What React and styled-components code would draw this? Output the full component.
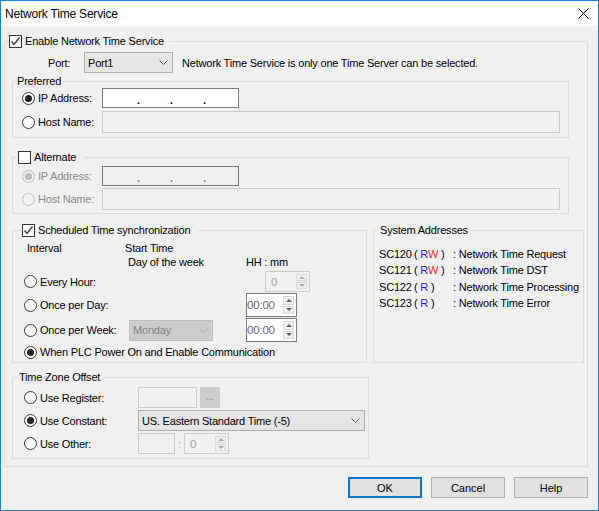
import React from "react";
import styled, { createGlobalStyle } from "styled-components";

const GlobalStyle = createGlobalStyle`
  html, body {
    margin: 0;
    padding: 0;
    background: #fff;
  }
  body {
    font-family: "Liberation Sans", Arial, sans-serif;
    font-size: 11px;
    letter-spacing: -0.2px;
    color: #000;
  }
`;

const Window = styled.div`
  width: 599px;
  height: 511px;
  box-sizing: border-box;
  border: 1px solid #1883d7;
  background: #f0f0f0;
  display: flex;
  flex-direction: column;
`;

const TitleBar = styled.div`
  height: 25px;
  background: #fff;
  display: flex;
  align-items: center;
  justify-content: space-between;
  padding-left: 4px;
`;

const Title = styled.span`
  font-size: 12px;
`;

const CloseButton = styled.div`
  width: 30px;
  height: 25px;
  display: flex;
  align-items: center;
  justify-content: center;
`;

const Body = styled.div`
  display: flex;
  flex-direction: column;
`;

const OuterGroup = styled.fieldset`
  width: 584px;
  box-sizing: border-box;
  margin: 8px 0 0 3px;
  padding: 0 0 7px 0;
  border: 1px solid #dcdcdc;
  min-width: 0;
`;

const SubGroup = styled.fieldset`
  width: ${(p) => p.$w}px;
  box-sizing: border-box;
  margin: ${(p) => p.$mt || 0}px 0 0 ${(p) => (p.$ml === undefined ? 7 : p.$ml)}px;
  padding: 0;
  border: 1px solid #dcdcdc;
  min-width: 0;
`;

const Legend = styled.legend`
  display: flex;
  align-items: center;
  gap: 3px;
  height: 14px;
  line-height: 14px;
  margin-left: ${(p) => p.$ml}px;
  padding: 0 ${(p) => p.$pr || 2}px 0 ${(p) => p.$pl || 0}px;
`;

const GroupBody = styled.div`
  padding: ${(p) => p.$pad};
`;

const Row = styled.div`
  display: flex;
  align-items: center;
  height: ${(p) => p.$h || 21}px;
  margin-top: ${(p) => p.$mt || 0}px;
`;

const PortRow = styled.div`
  display: flex;
  align-items: center;
  height: 21px;
  margin-top: 4px;
  padding-left: 43px;
`;

const PortLabel = styled.span`
  width: 36px;
`;

const Note = styled.span`
  margin-left: 9px;
`;

const OptionLabel = styled.label`
  display: flex;
  align-items: center;
  gap: 3px;
  width: ${(p) => p.$w}px;
  flex-shrink: 0;
  color: ${(p) => (p.$disabled ? "#8c8c8c" : "#000")};
`;

const Circle = styled.span`
  width: 13px;
  height: 13px;
  box-sizing: border-box;
  border-radius: 50%;
  border: 1px solid ${(p) => (p.$disabled ? "#bcbcbc" : "#333")};
  background: ${(p) => (p.$disabled ? "#f0f0f0" : "#fff")};
  display: inline-flex;
  align-items: center;
  justify-content: center;
  flex-shrink: 0;

  &::after {
    content: "";
    width: 7px;
    height: 7px;
    border-radius: 50%;
    background: ${(p) => (p.$disabled ? "#bcbcbc" : "#222")};
    display: ${(p) => (p.$checked ? "block" : "none")};
  }
`;

const Box = styled.span`
  width: 13px;
  height: 13px;
  box-sizing: border-box;
  border: 1px solid #333;
  background: #fff;
  display: inline-flex;
  align-items: center;
  justify-content: center;
  flex-shrink: 0;
`;

const TextBox = styled.div`
  width: ${(p) => p.$w}px;
  height: ${(p) => p.$h || 21}px;
  box-sizing: border-box;
  border: 1px solid ${(p) => (p.$dark ? "#7a7a7a" : "#cccccc")};
  background: ${(p) => (p.$white ? "#fff" : "#f0f0f0")};
  flex-shrink: 0;
`;

const IpBox = styled(TextBox)`
  display: flex;
  align-items: center;
  padding-left: 4px;
  color: ${(p) => (p.$white ? "#000" : "#6d6d6d")};
`;

const IpSegment = styled.span`
  width: 30px;
`;

const IpDot = styled.span`
  width: 3px;
  margin-top: 4px;
  font-weight: bold;
  line-height: 1;
`;

const Combo = styled.div`
  width: ${(p) => p.$w}px;
  height: 21px;
  box-sizing: border-box;
  border: 1px solid ${(p) => (p.$disabled ? "#bfbfbf" : "#adadad")};
  background: ${(p) => (p.$disabled ? "#cccccc" : "#e5e5e5")};
  color: ${(p) => (p.$disabled ? "#838383" : "#000")};
  display: flex;
  align-items: center;
  justify-content: space-between;
  padding: 0 4px 0 3px;
  flex-shrink: 0;
`;

const Spin = styled.div`
  width: ${(p) => p.$w}px;
  height: ${(p) => p.$h}px;
  box-sizing: border-box;
  margin-left: ${(p) => p.$ml || 0}px;
  border: 1px solid ${(p) => (p.$disabled ? "#cccccc" : "#7a7a7a")};
  background: ${(p) => (p.$disabled ? "#f0f0f0" : "#fff")};
  display: flex;
  align-items: center;
  padding: 2px 2px 2px 0;
  flex-shrink: 0;
`;

const SpinValue = styled.span`
  flex: 1;
  padding-left: ${(p) => p.$pl}px;
  color: ${(p) => (p.$disabled ? "#a0a0a0" : "#5f5f78")};
  font-size: 11.5px;
`;

const SpinButtons = styled.div`
  display: flex;
  flex-direction: column;
  gap: 1px;
  width: 11px;
  align-self: stretch;
`;

const SpinArrow = styled.div`
  flex: 1;
  box-sizing: border-box;
  border: 1px solid #d9d9d9;
  background: #f0f0f0;
  display: flex;
  align-items: center;
  justify-content: center;

  &::after {
    content: "";
    border-left: 3px solid transparent;
    border-right: 3px solid transparent;
    ${(p) => (p.$up ? "border-bottom" : "border-top")}: 3px solid
      ${(p) => (p.$disabled ? "#a8a8a8" : "#606060")};
  }
`;

const SmallButton = styled.div`
  width: 20px;
  height: 21px;
  box-sizing: border-box;
  margin-left: 3px;
  background: #cccccc;
  border: 1px solid #cccccc;
  color: #8c8c8c;
  font-size: 10px;
  display: flex;
  align-items: center;
  justify-content: center;
  padding-bottom: 2px;
`;

const Colon = styled.span`
  width: 9px;
  text-align: center;
  color: #a0a0a0;
`;

const SplitRow = styled.div`
  display: flex;
  align-items: stretch;
  margin: 9px 0 0 7px;
  gap: 6px;
`;

const HeadRow = styled.div`
  display: flex;
  height: 14px;
  line-height: 14px;
`;

const HeadCell = styled.span`
  box-sizing: border-box;
  width: ${(p) => p.$w}px;
  padding-left: ${(p) => p.$pl || 0}px;
  flex-shrink: 0;
`;

const Cell = styled.div`
  width: ${(p) => p.$w}px;
  flex-shrink: 0;
`;

const AddrList = styled.div`
  display: grid;
  grid-template-columns: 35px 39px auto;
  line-height: 16.33px;
  padding: 9px 0 0 5px;
`;

const Rd = styled.span`
  color: #1a1aff;
`;

const Wr = styled.span`
  color: #ff2a2a;
`;

const ButtonRow = styled.div`
  display: flex;
  justify-content: flex-end;
  gap: 9px;
  margin: 10px 10px 0 0;
`;

const DialogButton = styled.button`
  width: 74px;
  height: 21px;
  box-sizing: border-box;
  margin: 0;
  padding: 0;
  font: inherit;
  color: #000;
  background: #e1e1e1;
  border: ${(p) => (p.$primary ? "2px solid #0078d7" : "1px solid #adadad")};
`;

const Chevron = ({ color = "#606060" }) => (
  <svg width="9" height="5" viewBox="0 0 9 5">
    <polyline points="0.5,0.5 4.5,4.5 8.5,0.5" fill="none" stroke={color} strokeWidth="1" />
  </svg>
);

const Checkbox = ({ checked }) => (
  <Box>
    {checked && (
      <svg width="11" height="11" viewBox="0 0 11 11">
        <polyline points="1.5,5.5 4,8.5 9.5,1.5" fill="none" stroke="#333" strokeWidth="1.3" />
      </svg>
    )}
  </Box>
);

const Radio = ({ checked, disabled }) => <Circle $checked={checked} $disabled={disabled} />;

const IpAddress = ({ white, dark }) => (
  <IpBox $w={137} $h={20} $white={white} $dark={dark}>
    <IpSegment />
    <IpDot>.</IpDot>
    <IpSegment />
    <IpDot>.</IpDot>
    <IpSegment />
    <IpDot>.</IpDot>
  </IpBox>
);

const SpinBox = ({ value, w, h, ml, pl, disabled }) => (
  <Spin $w={w} $h={h} $ml={ml} $disabled={disabled}>
    <SpinValue $pl={pl} $disabled={disabled}>
      {value}
    </SpinValue>
    <SpinButtons>
      <SpinArrow $up $disabled={disabled} />
      <SpinArrow $disabled={disabled} />
    </SpinButtons>
  </Spin>
);

const addresses = [
  { code: "SC120", rw: true, text: "Network Time Request" },
  { code: "SC121", rw: true, text: "Network Time DST" },
  { code: "SC122", rw: false, text: "Network Time Processing" },
  { code: "SC123", rw: false, text: "Network Time Error" },
];

export default function App() {
  return (
    <>
      <GlobalStyle />
      <Window>
        <TitleBar>
          <Title>Network Time Service</Title>
          <CloseButton>
            <svg width="11" height="11" viewBox="0 0 11 11">
              <line x1="0.5" y1="0.5" x2="10.5" y2="10.5" stroke="#000" strokeWidth="1" />
              <line x1="10.5" y1="0.5" x2="0.5" y2="10.5" stroke="#000" strokeWidth="1" />
            </svg>
          </CloseButton>
        </TitleBar>
        <Body>
          <OuterGroup>
            <Legend $ml={4} $pr={5}>
              <Checkbox checked />
              <span>Enable Network Time Service</span>
            </Legend>

            <PortRow>
              <PortLabel>Port:</PortLabel>
              <Combo $w={89}>
                <span>Port1</span>
                <Chevron />
              </Combo>
              <Note>Network Time Service is only one Time Server can be selected.</Note>
            </PortRow>

            <SubGroup $w={557} $mt={1}>
              <Legend $ml={3} $pl={1} $pr={2}>
                Preferred
              </Legend>
              <GroupBody $pad="0 0 4px 9px">
                <Row $h={20}>
                  <OptionLabel $w={80}>
                    <Radio checked />
                    IP Address:
                  </OptionLabel>
                  <IpAddress white dark />
                </Row>
                <Row $h={22} $mt={3}>
                  <OptionLabel $w={80}>
                    <Radio />
                    Host Name:
                  </OptionLabel>
                  <TextBox $w={458} $h={22} />
                </Row>
              </GroupBody>
            </SubGroup>

            <SubGroup $w={557} $mt={12}>
              <Legend $ml={5} $pr={8}>
                <Checkbox />
                <span>Alternate</span>
              </Legend>
              <GroupBody $pad="2px 0 3px 9px">
                <Row $h={20}>
                  <OptionLabel $w={80} $disabled>
                    <Radio checked disabled />
                    IP Address:
                  </OptionLabel>
                  <IpAddress dark />
                </Row>
                <Row $h={22} $mt={2}>
                  <OptionLabel $w={80} $disabled>
                    <Radio disabled />
                    Host Name:
                  </OptionLabel>
                  <TextBox $w={458} $h={22} />
                </Row>
              </GroupBody>
            </SubGroup>

            <SplitRow>
              <SubGroup $w={355} $ml={0}>
                <Legend $ml={9} $pr={8}>
                  <Checkbox checked />
                  <span>Scheduled Time synchronization</span>
                </Legend>
                <GroupBody $pad="4px 0 1px 11px">
                  <HeadRow>
                    <HeadCell $w={101} $pl={3}>
                      Interval
                    </HeadCell>
                    <span>Start Time</span>
                  </HeadRow>
                  <HeadRow>
                    <HeadCell $w={222} $pl={104}>
                      Day of the week
                    </HeadCell>
                    <span>HH : mm</span>
                  </HeadRow>
                  <Row $h={23} $mt={1}>
                    <OptionLabel $w={105}>
                      <Radio />
                      Every Hour:
                    </OptionLabel>
                    <Cell $w={117} />
                    <SpinBox value="0" w={45} h={21} ml={19} pl={5} disabled />
                  </Row>
                  <Row $h={24}>
                    <OptionLabel $w={105}>
                      <Radio />
                      Once per Day:
                    </OptionLabel>
                    <Cell $w={117} />
                    <SpinBox value="00:00" w={51} h={24} pl={0} />
                  </Row>
                  <Row $h={24} $mt={1}>
                    <OptionLabel $w={105}>
                      <Radio />
                      Once per Week:
                    </OptionLabel>
                    <Cell $w={117}>
                      <Combo $w={84} $disabled>
                        <span>Monday</span>
                        <Chevron color="#a8a8a8" />
                      </Combo>
                    </Cell>
                    <SpinBox value="00:00" w={51} h={24} pl={0} />
                  </Row>
                  <Row $h={18} $mt={1}>
                    <OptionLabel $w={300}>
                      <Radio checked />
                      When PLC Power On and Enable Communication
                    </OptionLabel>
                  </Row>
                </GroupBody>
              </SubGroup>

              <SubGroup $w={211} $ml={0}>
                <Legend $ml={4} $pl={2} $pr={2}>
                  System Addresses
                </Legend>
                <AddrList>
                  {addresses.map((a) => (
                    <React.Fragment key={a.code}>
                      <span>{a.code}</span>
                      <span>
                        ( <Rd>R</Rd>
                        {a.rw && <Wr>W</Wr>} )
                      </span>
                      <span>: {a.text}</span>
                    </React.Fragment>
                  ))}
                </AddrList>
              </SubGroup>
            </SplitRow>

            <SubGroup $w={357} $mt={7}>
              <Legend $ml={4} $pl={2} $pr={2}>
                Time Zone Offset
              </Legend>
              <GroupBody $pad="3px 0 4px 11px">
                <Row>
                  <OptionLabel $w={114}>
                    <Radio />
                    Use Register:
                  </OptionLabel>
                  <TextBox $w={59} />
                  <SmallButton>...</SmallButton>
                </Row>
                <Row $mt={2}>
                  <OptionLabel $w={114}>
                    <Radio checked />
                    Use Constant:
                  </OptionLabel>
                  <Combo $w={227}>
                    <span>US. Eastern Standard Time (-5)</span>
                    <Chevron />
                  </Combo>
                </Row>
                <Row $mt={2}>
                  <OptionLabel $w={114}>
                    <Radio />
                    Use Other:
                  </OptionLabel>
                  <TextBox $w={37} />
                  <Colon>:</Colon>
                  <SpinBox value="0" w={45} h={21} pl={5} disabled />
                </Row>
              </GroupBody>
            </SubGroup>
          </OuterGroup>

          <ButtonRow>
            <DialogButton $primary>OK</DialogButton>
            <DialogButton>Cancel</DialogButton>
            <DialogButton>Help</DialogButton>
          </ButtonRow>
        </Body>
      </Window>
    </>
  );
}
